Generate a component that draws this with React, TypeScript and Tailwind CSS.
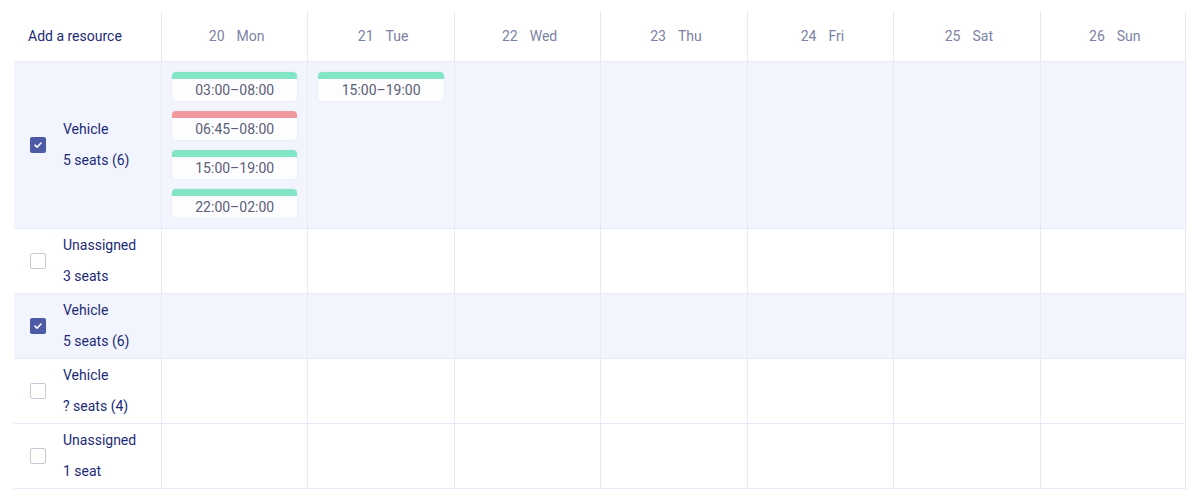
import React from 'react';

type Shift = { time: string; tone: 'green' | 'red' };

type Resource = {
  id: number;
  title: string;
  seats: string;
  checked: boolean;
  shifts: Record<number, Shift[]>;
};

const days = [
  { num: 20, name: 'Mon' },
  { num: 21, name: 'Tue' },
  { num: 22, name: 'Wed' },
  { num: 23, name: 'Thu' },
  { num: 24, name: 'Fri' },
  { num: 25, name: 'Sat' },
  { num: 26, name: 'Sun' },
];

const resources: Resource[] = [
  {
    id: 1,
    title: 'Vehicle',
    seats: '5 seats (6)',
    checked: true,
    shifts: {
      0: [
        { time: '03:00–08:00', tone: 'green' },
        { time: '06:45–08:00', tone: 'red' },
        { time: '15:00–19:00', tone: 'green' },
        { time: '22:00–02:00', tone: 'green' },
      ],
      1: [{ time: '15:00–19:00', tone: 'green' }],
    },
  },
  { id: 2, title: 'Unassigned', seats: '3 seats', checked: false, shifts: {} },
  { id: 3, title: 'Vehicle', seats: '5 seats (6)', checked: true, shifts: {} },
  { id: 4, title: 'Vehicle', seats: '? seats (4)', checked: false, shifts: {} },
  { id: 5, title: 'Unassigned', seats: '1 seat', checked: false, shifts: {} },
];

const Checkbox: React.FC<{ checked: boolean }> = ({ checked }) =>
  checked ? (
    <span className="flex h-4 w-4 shrink-0 items-center justify-center rounded-[2px] bg-[#4d5aa6]">
      <svg width="10" height="10" viewBox="0 0 10 10" fill="none">
        <path d="M2 5.2 L4.1 7.2 L8 3" stroke="white" strokeWidth="1.6" strokeLinecap="round" strokeLinejoin="round" />
      </svg>
    </span>
  ) : (
    <span className="h-4 w-4 shrink-0 rounded-[2px] border-[1.5px] border-[#c5c9d8] bg-white" />
  );

const ShiftCard: React.FC<{ shift: Shift }> = ({ shift }) => (
  <div className="h-[29px] overflow-hidden rounded-[4px] bg-[#fdfdff] shadow-[0_0_2px_rgba(60,70,130,0.12)]">
    <div className={shift.tone === 'green' ? 'h-[7px] bg-[#82e5c6]' : 'h-[7px] bg-[#f1999d]'} />
    <div className="flex h-[22px] items-center justify-center text-[14px] leading-none text-[#5a5f76]">
      {shift.time}
    </div>
  </div>
);

export default function App() {
  return (
    <div className="min-h-[501px] bg-white pl-[14px] pr-[12px] pt-[11px] font-['Roboto',sans-serif]">
      <div className="grid h-[51px] grid-cols-[147px_repeat(7,minmax(0,1fr))] border-b border-[#e7eaf6]">
        <div className="flex items-center pl-[14px] text-[14px] text-[#1c2a76]">Add a resource</div>
        {days.map((d, i) => (
          <div
            key={d.num}
            className={
              'flex items-center justify-center gap-[12px] border-l border-[#e7eaf6] pl-[4px] text-[14px] text-[#7b82a3]' +
              (i === days.length - 1 ? ' border-r' : '')
            }
          >
            <span>{d.num}</span>
            <span>{d.name}</span>
          </div>
        ))}
      </div>

      {resources.map((r) => (
        <div
          key={r.id}
          className={
            'grid grid-cols-[147px_repeat(7,minmax(0,1fr))] border-b border-[#e7eaf6]' +
            (r.checked ? ' bg-[#f2f5fd]' : ' bg-white') +
            (r.id === 1 ? ' min-h-[167px]' : ' h-[65px]')
          }
        >
          <div className="flex items-center pl-[16px]">
            <Checkbox checked={r.checked} />
            <div className="ml-[17px] flex flex-col gap-[11px] pb-[1px] text-[14px] leading-[20px] text-[#1c2a76]">
              <span>{r.title}</span>
              <span>{r.seats}</span>
            </div>
          </div>
          {days.map((d, i) => (
            <div
              key={d.num}
              className={
                'flex flex-col gap-[10px] border-l border-[#e7eaf6] p-[10px]' +
                (i === days.length - 1 ? ' border-r' : '')
              }
            >
              {(r.shifts[i] ?? []).map((s, k) => (
                <ShiftCard key={k} shift={s} />
              ))}
            </div>
          ))}
        </div>
      ))}
    </div>
  );
}
